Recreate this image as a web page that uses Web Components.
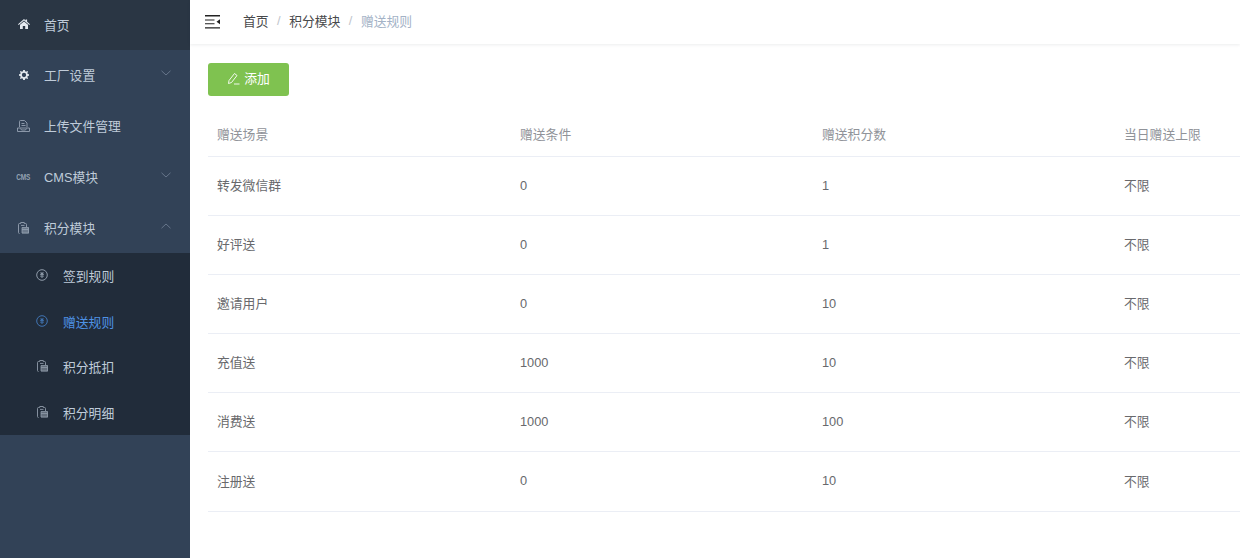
<!DOCTYPE html>
<html>
<head>
<meta charset="utf-8">
<style>
	html, body { margin: 0; height: 100%; overflow: hidden; background: #fff; }
	body { font-family: "Liberation Sans", "Noto Sans CJK SC", sans-serif; font-size: 12.8px; }
</style>
</head>
<body>
<template id="icons">
	<svg data-name="home" viewBox="0 0 12 10" width="12" height="10"><path fill="currentColor" d="M6 0 7.600 1.400V.6h1.500v2.100L12 5.200l-.7.7L6 1.500.7 5.900 0 5.200zM6 2.400l4 3.300V10H7.200V7H4.800v3H2V5.700z"/></svg>
	<svg data-name="gear" viewBox="0 0 12 12" width="10" height="10"><path fill="currentColor" fill-rule="evenodd" d="M5 0h2l.3 1.600 1.200.5L9.900 1.200l1 1-.9 1.400.5 1.200L12 5v2l-1.500.3-.5 1.200.9 1.400-1 1-1.400-.9-1.200.5L7 12H5l-.3-1.500-1.200-.5-1.400.9-1-1 .9-1.400-.5-1.200L0 7V5l1.500-.2.500-1.200-.9-1.400 1-1 1.400.9 1.200-.5zM6 3.400a2.600 2.600 0 1 0 0 5.200 2.600 2.600 0 0 0 0-5.200z"/></svg>
	<svg data-name="file" viewBox="0 0 13 12" width="13" height="12"><path fill="none" stroke="currentColor" stroke-width=".9" d="M2.500 7V1.500Q2.500.5 3.500.5h4L10 3v4M4.500 3.500h3M4.500 5.500h4M.5 8h12v3.500H.5zM3.500 8.500l1 1.500h4l1-1.500"/></svg>
	<svg data-name="coupon" viewBox="0 0 11 12" width="11" height="12"><path fill="none" stroke="currentColor" stroke-width=".9" d="M1.500 11.500q-1 0-1-1v-8q0-1 1-1h1.200V.5h3.600v1h1.200q1 0 1 1V5M3 3.400h3.500"/><path fill="currentColor" opacity=".6" d="M4 5.500h7v6H4z"/><path fill="none" stroke="currentColor" stroke-width=".8" d="M4 5.500h6.500v5.500H4zM4 7.500h6.500"/></svg>
	<svg data-name="coin" viewBox="0 0 12 12" width="12" height="12"><circle cx="6" cy="6" r="5.300" fill="none" stroke="currentColor"/><path fill="currentColor" d="M4 3.500h4L6.700 5.200H8v.8H6.500v.7H8v.7H6.500V9h-1V7.400H4v-.7h1.500V6H4v-.8h1.300z"/></svg>
	<svg data-name="down" viewBox="0 0 10 6" width="10" height="6"><path fill="none" stroke="currentColor" d="M.5.800 5 5 9.500.8"/></svg>
	<svg data-name="up" viewBox="0 0 10 6" width="10" height="6"><path fill="none" stroke="currentColor" d="M.5 5.200 5 1l4.500 4.200"/></svg>
</template>

<script>
const iconTemplate = document.getElementById('icons').content;

function iconMarkup(name) {
	if (name == 'cms') return '<span style="font:bold 9.500px/10px \'Liberation Sans\',sans-serif;display:block;transform:scaleX(.68);letter-spacing:-.2px">CMS</span>';
	return iconTemplate.querySelector(`[data-name="${name}"]`).outerHTML;
}

class AppIcon extends HTMLElement
{
	connectedCallback() {
		if (this.shadowRoot) return;
		let root = this.attachShadow({mode: 'open'});
		root.innerHTML = `<style>:host { display: inline-flex; align-items: center; justify-content: center; line-height: 0; }</style>${iconMarkup(this.getAttribute('name'))}`;
	}
}

class MenuItem extends HTMLElement
{
	constructor() {
		super();
		let root = this.attachShadow({mode: 'open'});
		root.innerHTML = `
			<style>
				:host {
					display: flex;
					align-items: center;
					height: 51px;
					padding-left: 17px;
					padding-right: 19px;
					color: #bfcbd9;
				}
				:host([sub]) {
					height: 45.5px;
					padding-left: 36px;
				}
				:host([current]) { color: #4f93e6; }
				:host([head]) { background: #2a3644; height: 50px; }
				#icon {
					width: 13px;
					margin-right: 14px;
					display: flex;
					justify-content: center;
					opacity: .7;
					margin-top: -2px;
				}
				:host([strong]) #icon { opacity: 1; color: #e4e9ef; }
				:host([sub]) #icon { width: 12px; margin-right: 15px; margin-top: -1px; }
				#label { flex: 1; padding-bottom: 2px; }
				:host([sub]) #label { padding-bottom: 0; }
				#arrow { color: #66758a; display: flex; margin-top: -5px; }
			</style>
			<div id="icon"></div>
			<div id="label"><slot></slot></div>
			<div id="arrow"></div>
		`;
	}

	connectedCallback() {
		this.shadowRoot.getElementById('icon').innerHTML = `<app-icon name="${this.getAttribute('icon')}"></app-icon>`;
		let arrow = this.getAttribute('arrow');
		if (arrow) this.shadowRoot.getElementById('arrow').innerHTML = `<app-icon name="${arrow}"></app-icon>`;
	}
}

class SideBar extends HTMLElement
{
	constructor() {
		super();
		let root = this.attachShadow({mode: 'open'});
		root.innerHTML = `
			<style>
				:host {
					display: block;
					flex: none;
					width: 190px;
					height: 100%;
					background: #324257;
				}
				#sub { background: #212c3a; margin-top: -1px; height: 182px; }
			</style>
			<slot></slot>
			<div id="sub"><slot name="sub"></slot></div>
		`;
	}
}

class TopBar extends HTMLElement
{
	constructor() {
		super();
		let root = this.attachShadow({mode: 'open'});
		root.innerHTML = `
			<style>
				:host {
					display: flex;
					align-items: center;
					flex: none;
					height: 44px;
					padding-left: 15px;
					background: #fff;
					box-shadow: 0 1px 3px rgba(0, 21, 41, .08);
					position: relative;
				}
				svg { flex: none; margin-right: 23px; }
				nav { display: flex; align-items: center; color: #48494b; padding-bottom: 3px; }
				i { font-style: normal; color: #c0c4cc; margin: 0 8.500px; }
				b { font-weight: normal; color: #a3b2c6; }
			</style>
			<svg viewBox="0 0 15 14" width="15" height="14">
				<path fill="#222" d="M0 0h15v1.400H0zM0 4.400h9.500v1H0zM0 8.200h9.500v1H0zM0 12.200h15v1.400H0z"/>
				<path fill="#222" d="M15 4.200v5l-3.500-2.500z"/>
			</svg>
			<nav>首页<i>/</i>积分模块<i>/</i><b>赠送规则</b></nav>
		`;
	}
}

class AddButton extends HTMLElement
{
	constructor() {
		super();
		let root = this.attachShadow({mode: 'open'});
		root.innerHTML = `
			<style>
				:host {
					display: inline-flex;
					align-items: center;
					justify-content: center;
					gap: 4px;
					width: 81px;
					height: 33px;
					box-sizing: border-box;
					background: #7fc250;
					border-radius: 3px;
					color: #fff;
				}
				span { padding-bottom: 4px; }
				svg { margin-top: -2px; }
			</style>
			<svg viewBox="0 0 13 13" width="13" height="13">
				<path fill="none" stroke="#fff" stroke-width=".9" d="M1.500 11.500 2 8.500 7.500 1.500l2.500 2L4.500 10.500zM7 12h5.500"/>
			</svg>
			<span><slot></slot></span>
		`;
	}
}

class DataTable extends HTMLElement
{
	constructor() {
		super();
		let root = this.attachShadow({mode: 'open'});
		root.innerHTML = `
			<style>
				:host { display: block; width: 1210px; margin-top: 18px; color: #68696c; }
				.row {
					display: grid;
					grid-template-columns: 303px 302px 302px 1fr;
					height: 59px;
					align-items: center;
					border-bottom: 1px solid #ebeef5;
					box-sizing: border-box;
				}
				.row.head { height: 43px; color: #909399; }
				.row:last-child { height: 60px; }
				.row > div { padding-left: 9px; padding-bottom: 3px; }
				.row > div.num { padding-bottom: 2px; }
			</style>
			<div id="rows"></div>
		`;
	}

	connectedCallback() {
		let head = JSON.parse(this.getAttribute('head'));
		let rows = JSON.parse(this.getAttribute('rows'));
		let cells = (r) => r.map(c => `<div class="${/^\d+$/.test(c) ? 'num' : ''}">${c}</div>`).join('');
		this.shadowRoot.getElementById('rows').innerHTML =
			`<div class="row head">${cells(head)}</div>` +
			rows.map(r => `<div class="row">${cells(r)}</div>`).join('');
	}
}

class AppPage extends HTMLElement
{
	constructor() {
		super();
		let root = this.attachShadow({mode: 'open'});
		root.innerHTML = `
			<style>
				:host { display: flex; height: 558px; width: 1240px; overflow: hidden; }
				#main { flex: 1; min-width: 0; display: flex; flex-direction: column; }
				#content { padding: 19px 0 0 18px; overflow: hidden; }
			</style>
			<slot name="side"></slot>
			<div id="main">
				<top-bar></top-bar>
				<div id="content"><slot></slot></div>
			</div>
		`;
	}
}

customElements.define('app-icon', AppIcon);
customElements.define('menu-item', MenuItem);
customElements.define('side-bar', SideBar);
customElements.define('top-bar', TopBar);
customElements.define('add-button', AddButton);
customElements.define('data-table', DataTable);
customElements.define('app-page', AppPage);
</script>

<app-page>
	<side-bar slot="side">
		<menu-item head strong icon="home">首页</menu-item>
		<menu-item strong icon="gear" arrow="down">工厂设置</menu-item>
		<menu-item icon="file">上传文件管理</menu-item>
		<menu-item icon="cms" arrow="down">CMS模块</menu-item>
		<menu-item icon="coupon" arrow="up">积分模块</menu-item>
		<menu-item slot="sub" sub icon="coin">签到规则</menu-item>
		<menu-item slot="sub" sub current icon="coin">赠送规则</menu-item>
		<menu-item slot="sub" sub icon="coupon">积分抵扣</menu-item>
		<menu-item slot="sub" sub icon="coupon">积分明细</menu-item>
	</side-bar>
	<add-button>添加</add-button>
	<data-table
		head='["赠送场景","赠送条件","赠送积分数","当日赠送上限"]'
		rows='[["转发微信群","0","1","不限"],["好评送","0","1","不限"],["邀请用户","0","10","不限"],["充值送","1000","10","不限"],["消费送","1000","100","不限"],["注册送","0","10","不限"]]'>
	</data-table>
</app-page>
</body>
</html>
